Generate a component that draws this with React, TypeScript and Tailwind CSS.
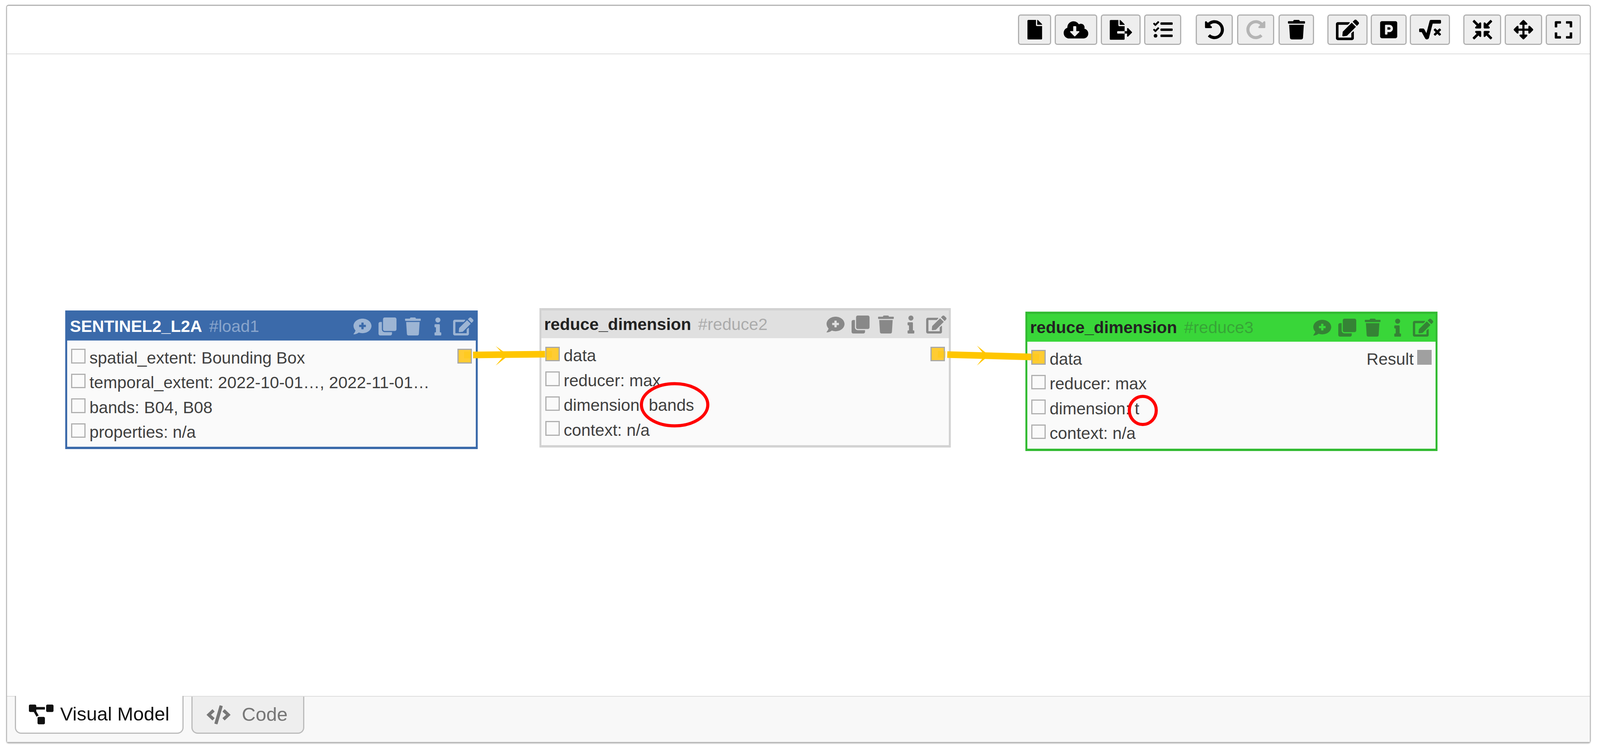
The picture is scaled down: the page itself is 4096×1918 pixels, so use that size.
import type { ReactNode } from "react";
import {
  FaFile,
  FaCloudDownloadAlt,
  FaFileExport,
  FaTasks,
  FaUndoAlt,
  FaRedoAlt,
  FaTrash,
  FaEdit,
  FaParking,
  FaSquareRootAlt,
  FaCompressArrowsAlt,
  FaArrowsAlt,
  FaExpand,
  FaCommentMedical,
  FaClone,
  FaInfo,
  FaProjectDiagram,
  FaCode,
} from "react-icons/fa";

function ToolButton({ width, disabled, children }: { width: string; disabled?: boolean; children: ReactNode }) {
  return (
    <div
      className={`${width} h-[78px] flex items-center justify-center rounded-[7px] border-[3px] border-[#b0b0b0] bg-[#eeeeee] text-[50px] ${
        disabled ? "text-[#b4b4b4]" : "text-black"
      }`}
    >
      {children}
    </div>
  );
}

function Toolbar() {
  return (
    <div className="h-[124px] shrink-0 flex items-center justify-end pr-[23px] gap-[34px] border-b-2 border-[#dddddd]">
      <div className="flex gap-[9px] mr-[3px]">
        <ToolButton width="w-[85px]"><FaFile /></ToolButton>
        <ToolButton width="w-[109px]"><FaCloudDownloadAlt className="text-[63px]" /></ToolButton>
        <ToolButton width="w-[102px]"><FaFileExport className="text-[57px]" /></ToolButton>
        <ToolButton width="w-[95px]"><FaTasks /></ToolButton>
      </div>
      <div className="flex gap-[11px]">
        <ToolButton width="w-[95px]"><FaUndoAlt /></ToolButton>
        <ToolButton width="w-[95px]" disabled><FaRedoAlt /></ToolButton>
        <ToolButton width="w-[91px]"><FaTrash /></ToolButton>
      </div>
      <div className="flex gap-[8px]">
        <ToolButton width="w-[103px]"><FaEdit className="text-[59px]" /></ToolButton>
        <ToolButton width="w-[92px]"><FaParking /></ToolButton>
        <ToolButton width="w-[103px]"><FaSquareRootAlt className="text-[56px]" /></ToolButton>
      </div>
      <div className="flex gap-[9px]">
        <ToolButton width="w-[97px]"><FaCompressArrowsAlt /></ToolButton>
        <ToolButton width="w-[96px]"><FaArrowsAlt /></ToolButton>
        <ToolButton width="w-[90px]"><FaExpand className="text-[51px]" /></ToolButton>
      </div>
    </div>
  );
}

function Check() {
  return <span className="inline-block w-[37px] h-[37.5px] mr-[10px] border-[3px] border-[#b0b0b0] bg-[#fafafa]" />;
}

function Port() {
  return <span className="inline-block w-[37px] h-[37.5px] border-[3px] border-[#a8a8a8] bg-[#ffcc33]" />;
}

function Row({ label, input, output, result }: { label: string; input?: boolean; output?: boolean; result?: boolean }) {
  return (
    <div className="h-[63.5px] leading-[63.5px] flex items-baseline justify-between whitespace-nowrap">
      <span>
        {input ? <span className="inline-block w-[37px] h-[37.5px] mr-[10px] border-[3px] border-[#a8a8a8] bg-[#ffcc33]" /> : <Check />}
        {label}
      </span>
      {output && <Port />}
      {result && (
        <span>
          Result
          <span className="inline-block w-[37px] h-[37.5px] ml-[9px] bg-[#a0a0a0]" />
        </span>
      )}
    </div>
  );
}

function NodeIcons({ color }: { color: string }) {
  return (
    <div className={`flex items-center text-[46px] opacity-50 ${color}`}>
      <span className="w-[64.5px] flex justify-center"><FaCommentMedical /></span>
      <span className="w-[64.5px] flex justify-center"><FaClone /></span>
      <span className="w-[64.5px] flex justify-center"><FaTrash /></span>
      <span className="w-[64.5px] flex justify-center"><FaInfo /></span>
      <span className="w-[64.5px] flex justify-center"><FaEdit className="text-[52px]" /></span>
    </div>
  );
}

function Node({
  position,
  border,
  header,
  title,
  id,
  light,
  children,
}: {
  position: string;
  border: string;
  header: string;
  title: string;
  id: string;
  light?: boolean;
  children: ReactNode;
}) {
  return (
    <div className={`absolute ${position} flex flex-col border-x-[5px] border-y-[6px] bg-[#fafafa] text-[42.6px] text-[#404040] ${border}`}>
      <div className={`h-[71px] shrink-0 flex items-center justify-between pl-[7px] ${header}`}>
        <div className="whitespace-nowrap">
          <span className={`font-bold ${light ? "text-white" : "text-[#222222]"}`}>{title}</span>
          <span className={`ml-[18px] ${light ? "text-white opacity-40" : "text-[#333333] opacity-30"}`}>{id}</span>
        </div>
        <NodeIcons color={light ? "text-white" : "text-[#333333]"} />
      </div>
      <div className="pt-[13px] px-[10px]">{children}</div>
    </div>
  );
}

function Overlay() {
  return (
    <svg className="absolute inset-0 w-full h-full pointer-events-none" fill="none">
      <path d="M1170 770 L1189 770" stroke="#ffc600" strokeWidth="17" opacity="0.35" />
      <path d="M1193 770 L1377 768" stroke="#ffc600" strokeWidth="17" />
      <path d="M1377 768 L1395 768" stroke="#ffc600" strokeWidth="17" opacity="0.35" />
      <path d="M1251 747 L1284 771 L1251 797 L1273 771 Z" fill="#ffc600" />
      <path d="M2383 768 L2403 769" stroke="#ffc600" strokeWidth="17" opacity="0.35" />
      <path d="M2407 769 L2622 775" stroke="#ffc600" strokeWidth="17" />
      <path d="M2622 775 L2642 776" stroke="#ffc600" strokeWidth="17" opacity="0.35" />
      <path d="M2483 746 L2514 771 L2483 797 L2503 771 Z" fill="#ffc600" />
      <ellipse cx="1709" cy="897.5" rx="85" ry="54" stroke="#ff0000" strokeWidth="8" />
      <ellipse cx="2907.5" cy="912" rx="34.5" ry="36" stroke="#ff0000" strokeWidth="8" />
    </svg>
  );
}

function Tabs() {
  return (
    <div className="h-[118px] shrink-0 flex items-start gap-[20px] pl-[20px] border-t-2 border-[#dddddd] bg-[#f8f8f8] text-[49px]">
      <div className="w-[432px] h-[97px] -mt-[2px] flex items-center pl-[33px] gap-[17px] rounded-b-[16px] border-[3px] border-t-0 border-[#bbbbbb] bg-white text-[#111111]">
        <FaProjectDiagram className="text-[63px]" />
        <span>Visual Model</span>
      </div>
      <div className="w-[289px] h-[95px] flex items-center pl-[36px] gap-[29px] rounded-b-[16px] border-[3px] border-t-0 border-[#bbbbbb] bg-[#eeeeee] text-[#777777]">
        <FaCode className="text-[61px]" />
        <span>Code</span>
      </div>
    </div>
  );
}

export default function App() {
  return (
    <div className="w-[4096px] h-[1918px] pt-[12px] pb-[16px] pl-[16px] pr-[24px] bg-white font-['Liberation_Sans',Arial,sans-serif]">
      <div className="h-full flex flex-col rounded-[6px] border-2 border-t-[3px] border-[#b4b4b4] bg-white shadow-[0_2px_3px_#bbbbbb]">
        <Toolbar />
        <div className="relative flex-1">
          <Node
            position="left-[149px] top-[655.6px] w-[1056px] h-[355px]"
            border="border-[#3b6aaa]"
            header="bg-[#3b6aaa]"
            title="SENTINEL2_L2A"
            id="#load1"
            light
          >
            <Row label="spatial_extent: Bounding Box" output />
            <Row label="temporal_extent: 2022-10-01…, 2022-11-01…" />
            <Row label="bands: B04, B08" />
            <Row label="properties: n/a" />
          </Node>
          <Node
            position="left-[1363px] top-[650px] w-[1053px] h-[357px]"
            border="border-[#d2d2d2]"
            header="bg-[#e0e0e0]"
            title="reduce_dimension"
            id="#reduce2"
          >
            <Row label="data" input output />
            <Row label="reducer: max" />
            <Row label="dimension: bands" />
            <Row label="context: n/a" />
          </Node>
          <Node
            position="left-[2607px] top-[658.5px] w-[1055px] h-[357px]"
            border="border-[#33bb33]"
            header="bg-[#39d639]"
            title="reduce_dimension"
            id="#reduce3"
          >
            <Row label="data" input result />
            <Row label="reducer: max" />
            <Row label="dimension: t" />
            <Row label="context: n/a" />
          </Node>
          <Overlay />
        </div>
        <Tabs />
      </div>
    </div>
  );
}
